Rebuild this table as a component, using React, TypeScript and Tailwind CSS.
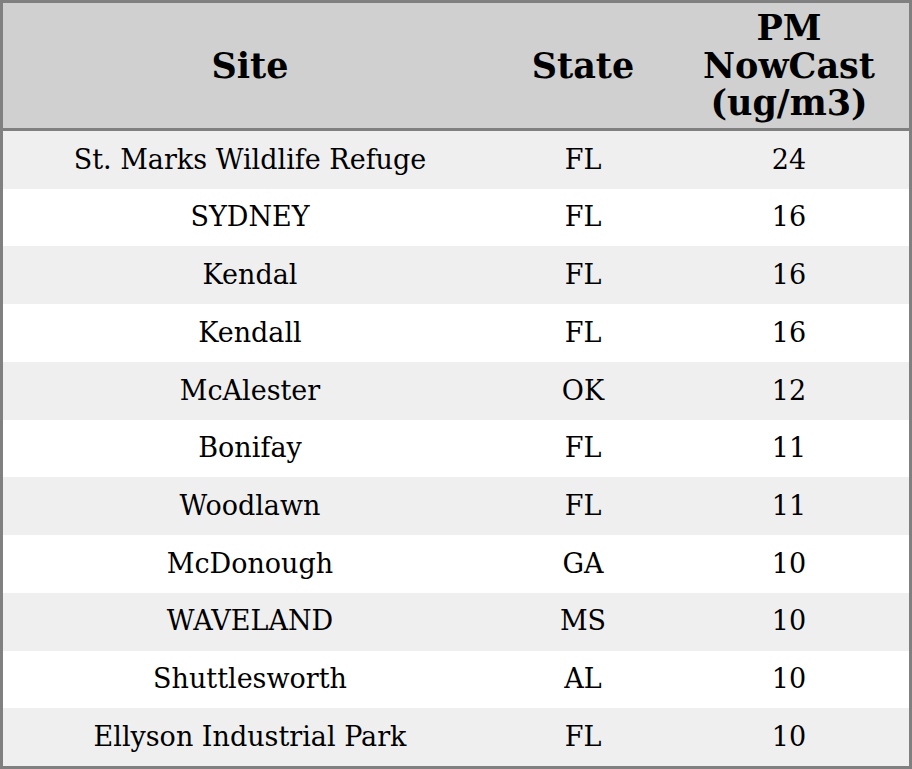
const rows: [string, string, number][] = [
  ['St. Marks Wildlife Refuge', 'FL', 24],
  ['SYDNEY', 'FL', 16],
  ['Kendal', 'FL', 16],
  ['Kendall', 'FL', 16],
  ['McAlester', 'OK', 12],
  ['Bonifay', 'FL', 11],
  ['Woodlawn', 'FL', 11],
  ['McDonough', 'GA', 10],
  ['WAVELAND', 'MS', 10],
  ['Shuttlesworth', 'AL', 10],
  ['Ellyson Industrial Park', 'FL', 10],
];

export default function App() {
  return (
    <div className="w-[912px] h-[769px] bg-white font-['DejaVu_Serif',serif] text-black">
      <div className="border-[3px] border-[#808080] h-full flex flex-col">
        <div className="grid grid-cols-[494px_172px_240px] h-[128px] shrink-0 bg-[#d0d0d0] border-b-[3px] border-[#808080] items-center text-center font-bold text-[35px] leading-[37.5px]">
          <div>Site</div>
          <div>State</div>
          <div>
            PM
            <br />
            NowCast
            <br />
            (ug/m3)
          </div>
        </div>
        {rows.map(([site, state, pm], i) => (
          <div
            key={site}
            className={
              'grid grid-cols-[494px_172px_240px] flex-1 items-center text-center text-[27px] ' +
              (i % 2 === 0 ? 'bg-[#efefef]' : 'bg-white')
            }
          >
            <div>{site}</div>
            <div>{state}</div>
            <div>{pm}</div>
          </div>
        ))}
      </div>
    </div>
  );
}
